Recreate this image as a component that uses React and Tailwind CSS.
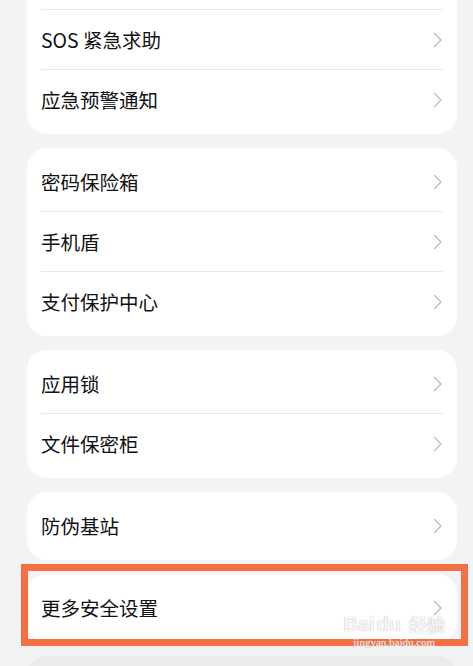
import React from 'react';

const groups = [
  ['__hidden', 'SOS 紧急求助', '应急预警通知'],
  ['密码保险箱', '手机盾', '支付保护中心'],
  ['应用锁', '文件保密柜'],
  ['防伪基站'],
];

const Chevron = () => (
  <svg width="10" height="16" viewBox="0 0 10 16" fill="none" className="shrink-0">
    <path d="M1.5 1.5 L8 8 L1.5 14.5" stroke="#bdbdbd" strokeWidth="1.4" strokeLinecap="round" strokeLinejoin="round" />
  </svg>
);

const Row = ({ label, last }) => (
  <div className="flex h-[60px] items-center justify-between px-[14px]">
    <div className={`flex h-full flex-1 items-center justify-between ${last ? '' : 'border-b border-[#e9e9eb]'}`}>
      <span className="text-[19.5px] text-[#111111]">{label === '__hidden' ? '' : label}</span>
      <Chevron />
    </div>
  </div>
);

const Card = ({ items }) => (
  <div className="rounded-[20px] bg-white py-[4px]">
    {items.map((label, i) => (
      <Row key={i} label={label} last={i === items.length - 1} />
    ))}
  </div>
);

export default function App() {
  return (
    <div
      className="h-[666px] w-[473px] overflow-hidden bg-[#f2f3f5]"
      style={{ fontFamily: '"Noto Sans CJK SC", "Noto Sans", sans-serif' }}
    >
      <div className="mt-[-54px] flex flex-col gap-[14px] pl-[27px] pr-[16px]">
        {groups.map((items, i) => (
          <Card key={i} items={items} />
        ))}

        <div className="relative">
          <Card items={['更多安全设置']} />
          <div className="pointer-events-none absolute -left-[6px] -right-[11px] -top-[10px] -bottom-[4px] border-[7px] border-[#f47042]" />
          <div className="pointer-events-none absolute right-[12px] top-[40px] flex flex-col items-center text-white/90 [text-shadow:0_0_1px_#9a9a9a]">
            <div className="flex items-center gap-[2px] text-[20px] leading-none font-bold" style={{ fontFamily: '"Liberation Sans", sans-serif' }}>
              <span>Bai</span>
              <span>du</span>
              <span className="ml-[6px] text-[18px]" style={{ fontFamily: '"Noto Sans CJK SC", sans-serif' }}>经验</span>
            </div>
            <div className="mt-[3px] text-[11px] leading-none" style={{ fontFamily: '"Liberation Serif", serif' }}>
              jingyan.baidu.com
            </div>
          </div>
        </div>

        <div className="h-[60px] rounded-[20px] bg-[#ebebed]" />
      </div>
    </div>
  );
}
